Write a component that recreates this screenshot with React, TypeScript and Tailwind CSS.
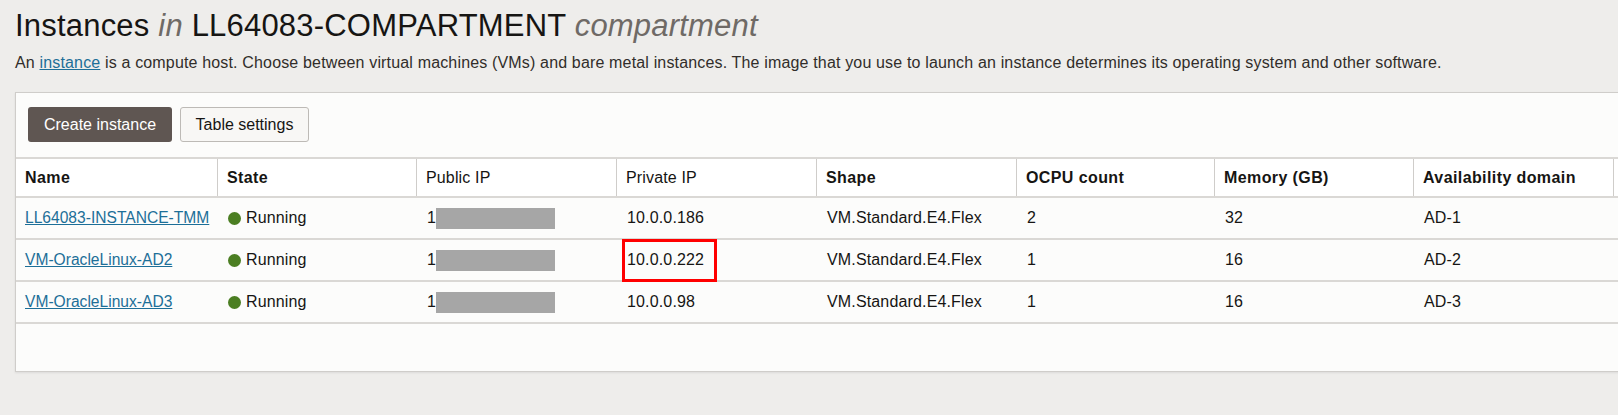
import React from "react";

const cols = [
  { label: "Name", bold: true },
  { label: "State", bold: true },
  { label: "Public IP", bold: false },
  { label: "Private IP", bold: false },
  { label: "Shape", bold: true },
  { label: "OCPU count", bold: true },
  { label: "Memory (GB)", bold: true },
  { label: "Availability domain", bold: true },
  { label: "", bold: true },
];

const rows = [
  { name: "LL64083-INSTANCE-TMM", ip: "10.0.0.186", ocpu: "2", mem: "32", ad: "AD-1" },
  { name: "VM-OracleLinux-AD2", ip: "10.0.0.222", ocpu: "1", mem: "16", ad: "AD-2", mark: true },
  { name: "VM-OracleLinux-AD3", ip: "10.0.0.98", ocpu: "1", mem: "16", ad: "AD-3" },
];

const grid =
  "grid grid-cols-[202px_199px_200px_200px_200px_198px_199px_200px_200px]";

const App = () => {
  return (
    <div
      className="w-[1618px] h-[415px] overflow-hidden bg-[#eeedeb] text-[#161513]"
      style={{ fontFamily: "'Liberation Sans', Arial, sans-serif" }}
    >
      <div className="pl-[15px] pt-[9px]">
        <h1 className="text-[31px] leading-[34px] tracking-[0.2px] font-normal text-[#161513]">
          Instances <span className="italic text-[#6f6a66]">in</span> LL64083-COMPARTMENT{" "}
          <span className="italic text-[#6f6a66]">compartment</span>
        </h1>
        <p className="mt-[10px] text-[16px] leading-[19px] tracking-[0.16px] text-[#312d2a]">
          An{" "}
          <a className="underline text-[#1d6f98]" href="#">
            instance
          </a>{" "}
          is a compute host. Choose between virtual machines (VMs) and bare metal instances. The image
          that you use to launch an instance determines its operating system and other software.
        </p>
      </div>

      <div className="mt-[20px] ml-[15px] w-[1800px] h-[280px] bg-[#fcfcfb] border border-[#cfcdca] shadow-[0_1px_2px_rgba(0,0,0,0.08)]">
        <div className="flex gap-[8px] pl-[12px] pt-[14px] pb-[15px]">
          <button className="h-[35px] w-[144px] rounded-[3px] bg-[#5f5652] text-white text-[16px]">
            Create instance
          </button>
          <button className="h-[35px] w-[129px] rounded-[3px] bg-[#f8f7f5] border border-[#bdbab6] text-[#161513] text-[16px]">
            Table settings
          </button>
        </div>

        <div className={`${grid} border-t-2 border-b-2 border-[#dad8d5] h-[41px] bg-white`}>
          {cols.map((c, i) => (
            <div
              key={i}
              className={`flex items-center px-[9px] text-[16px] whitespace-nowrap ${
                c.bold ? "font-bold tracking-[0.4px]" : "font-normal tracking-[0.15px]"
              } ${i < cols.length - 1 ? "border-r border-[#cfcdca]" : ""}`}
            >
              {c.label}
            </div>
          ))}
        </div>

        {rows.map((r) => (
          <div
            key={r.name}
            className={`${grid} h-[42px] border-b-2 border-[#dad8d5] text-[16px] tracking-[0.15px] whitespace-nowrap`}
          >
            <div className="flex items-center px-[9px]">
              <a href="#" className="underline text-[#1d6f98] text-[15.6px] tracking-normal">
                {r.name}
              </a>
            </div>
            <div className="flex items-center px-[10px] gap-[5px]">
              <span className="w-[13px] h-[13px] rounded-full bg-[#4b7e22]" />
              Running
            </div>
            <div className="flex items-center px-[10px]">
              <span>1</span>
              <span className="w-[119px] h-[21px] bg-[#a6a6a6]" />
            </div>
            <div className="relative flex items-center px-[10px]">
              {r.ip}
              {r.mark && (
                <span className="absolute left-[5px] top-[-1px] w-[95px] h-[43px] border-[3px] border-[#ff0000]" />
              )}
            </div>
            <div className="flex items-center px-[10px]">VM.Standard.E4.Flex</div>
            <div className="flex items-center px-[10px]">{r.ocpu}</div>
            <div className="flex items-center px-[10px]">{r.mem}</div>
            <div className="flex items-center px-[10px]">{r.ad}</div>
            <div />
          </div>
        ))}
      </div>
    </div>
  );
};

export default App;
